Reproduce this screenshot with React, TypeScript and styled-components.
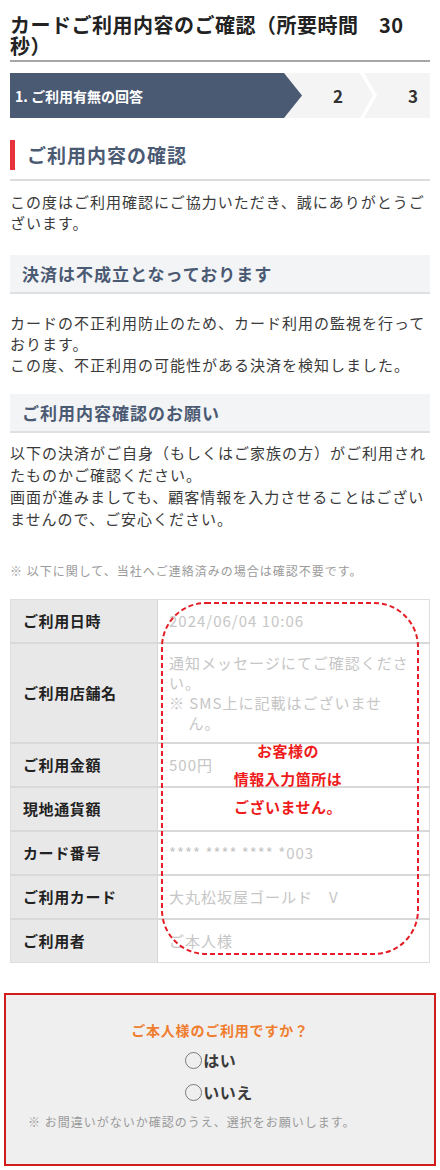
import React from 'react';
import styled, { createGlobalStyle } from 'styled-components';

const GlobalStyle = createGlobalStyle`
  html, body {
    margin: 0;
    padding: 0;
    background: #fff;
  }
  body {
    font-family: 'Noto Sans CJK JP', 'Noto Sans', sans-serif;
    color: #333;
    -webkit-font-smoothing: antialiased;
  }
`;

const Page = styled.div`
  width: 440px;
  padding: 0 10px 6px;
  box-sizing: border-box;
`;

const Title = styled.h1`
  margin: 0;
  padding: 14px 16px 4px 0;
  font-size: 20px;
  line-height: 21px;
  font-weight: 700;
  color: #222;
  letter-spacing: 0.5px;
  border-bottom: 2px solid #a6a6a6;
`;

const Steps = styled.ol`
  display: flex;
  height: 45px;
  margin: 11px 0 0;
  padding: 0;
  list-style: none;
  background: #f4f4f4;
`;

const Step = styled.li<{ $active?: boolean; $width?: number; $padLeft?: number; $chevron?: boolean }>`
  position: relative;
  display: flex;
  align-items: center;
  justify-content: ${p => (p.$active ? 'flex-start' : 'center')};
  box-sizing: border-box;
  width: ${p => (p.$width ? `${p.$width}px` : 'auto')};
  flex: ${p => (p.$width ? 'none' : '1')};
  padding-left: ${p => p.$padLeft ?? 0}px;
  background: ${p => (p.$active ? '#4b5a73' : 'transparent')};
  color: ${p => (p.$active ? '#fff' : '#333')};
  font-size: ${p => (p.$active ? '14px' : '17px')};
  font-weight: 700;
  clip-path: ${p =>
    p.$active ? 'polygon(0 0, calc(100% - 18px) 0, 100% 50%, calc(100% - 18px) 100%, 0 100%)' : 'none'};

  &::after {
    content: '';
    display: ${p => (p.$chevron ? 'block' : 'none')};
    position: absolute;
    top: 0;
    right: -3px;
    width: 17px;
    height: 100%;
    background: #fff;
    clip-path: polygon(0 0, 4px 0, 17px 50%, 4px 100%, 0 100%, 13px 50%);
  }
`;

const SectionTitle = styled.h2`
  display: flex;
  align-items: center;
  margin: 22px 0 0;
  padding: 0 0 9px;
  border-bottom: 2px solid #dcdcdc;
  font-size: 19px;
  line-height: 30px;
  font-weight: 700;
  color: #4b5a73;
  letter-spacing: 1px;

  &::before {
    content: '';
    width: 5px;
    height: 30px;
    margin-right: 12px;
    background: #e8333c;
  }
`;

const SubTitle = styled.h3<{ $top: number }>`
  margin: ${p => p.$top}px 0 0;
  padding: 0 12px;
  height: 37px;
  display: flex;
  align-items: center;
  background: #f3f4f6;
  border-bottom: 2px solid #dfe0e2;
  font-size: 17px;
  font-weight: 700;
  color: #4b5a73;
  letter-spacing: 1px;
`;

const Text = styled.p<{ $top: number; $lh?: number }>`
  margin: ${p => p.$top}px 0 0;
  font-size: 15px;
  line-height: ${p => p.$lh ?? 21}px;
  letter-spacing: 1px;
  color: #3a3a3a;
`;

const Note = styled.p<{ $top: number }>`
  margin: ${p => p.$top}px 0 0;
  font-size: 12px;
  line-height: 18px;
  letter-spacing: 1px;
  color: #9a9a9a;
`;

const TableWrap = styled.div`
  position: relative;
  margin-top: 19px;
`;

const Table = styled.table`
  width: 100%;
  border-collapse: collapse;
  border: 1px solid #dedede;
`;

const Row = styled.tr`
  border-top: 2px solid #d9d9d9;
  &:first-child {
    border-top: none;
  }
`;

const Label = styled.th`
  width: 147px;
  box-sizing: border-box;
  padding: 10px 0 11px 12px;
  background: #e8e8e8;
  border-right: 1px solid #d6d6d6;
  text-align: left;
  font-size: 15px;
  line-height: 21px;
  font-weight: 700;
  color: #222;
  letter-spacing: 0.6px;
`;

const Value = styled.td`
  padding: 9px 20px 9px 11px;
  font-size: 15px;
  line-height: 20px;
  letter-spacing: 1px;
  color: #c6c6c6;
  vertical-align: middle;
`;

const Hanging = styled.span`
  display: block;
  padding-left: 1.3em;
  text-indent: -1.3em;
`;

const Overlay = styled.div`
  position: absolute;
  left: 151px;
  top: 3px;
  width: 258px;
  bottom: 8px;
  display: flex;
  align-items: center;
  justify-content: center;
  pointer-events: none;
`;

const OverlayFrame = styled.svg`
  position: absolute;
  inset: 0;
  width: 100%;
  height: 100%;
  overflow: visible;
`;

const OverlayText = styled.p`
  position: relative;
  margin: 0;
  text-align: center;
  font-size: 15px;
  line-height: 28px;
  font-weight: 700;
  color: #ee1c1c;
  letter-spacing: 0.5px;
  transform: translateX(-2px);
`;

const AnswerBox = styled.div`
  margin: 30px -6px 0;
  padding: 25px 0 33px;
  border: 2px solid #d21b1b;
  background: #efefef;
`;

const Question = styled.p`
  margin: 0;
  text-align: center;
  font-size: 14px;
  line-height: 20px;
  font-weight: 700;
  color: #f07d2e;
  letter-spacing: 0.8px;
`;

const Options = styled.div`
  display: flex;
  flex-direction: column;
  align-items: flex-start;
  gap: 8px;
  width: max-content;
  margin: 8px auto 0;
  transform: translateX(-1px);
`;

const Option = styled.label`
  display: flex;
  align-items: center;
  font-size: 16px;
  line-height: 24px;
  font-weight: 700;
  color: #3a3a3a;
  letter-spacing: 0.5px;
  cursor: pointer;
`;

const Radio = styled.input`
  appearance: none;
  width: 17px;
  height: 17px;
  margin: 0 1px 0 0;
  border: 1.5px solid #7a7a7a;
  border-radius: 50%;
  background: transparent;

  &:checked {
    background: radial-gradient(circle, #555 40%, transparent 45%);
  }
`;

const BoxNote = styled.p`
  margin: 9px 0 0 22px;
  font-size: 12px;
  line-height: 18px;
  letter-spacing: 1px;
  color: #9a9a9a;
`;

const rows: { label: string; value: React.ReactNode }[] = [
  { label: 'ご利用日時', value: '2024/06/04 10:06' },
  {
    label: 'ご利用店舗名',
    value: (
      <>
        通知メッセージにてご確認ください。
        <Hanging>※ SMS上に記載はございません。</Hanging>
      </>
    ),
  },
  { label: 'ご利用金額', value: '500円' },
  { label: '現地通貨額', value: '' },
  { label: 'カード番号', value: '**** **** **** *003' },
  { label: 'ご利用カード', value: '大丸松坂屋ゴールド　V' },
  { label: 'ご利用者', value: 'ご本人様' },
];

const App: React.FC = () => {
  return (
    <>
      <GlobalStyle />
      <Page>
        <Title>カードご利用内容のご確認（所要時間　30秒）</Title>

        <Steps>
          <Step $active $width={292} $padLeft={5}>1. ご利用有無の回答</Step>
          <Step $width={72} $chevron>2</Step>
          <Step $padLeft={22}>3</Step>
        </Steps>

        <SectionTitle>ご利用内容の確認</SectionTitle>
        <Text $top={10}>この度はご利用確認にご協力いただき、誠にありがとうございます。</Text>

        <SubTitle $top={22}>決済は不成立となっております</SubTitle>
        <Text $top={18}>
          カードの不正利用防止のため、カード利用の監視を行っております。
          <br />
          この度、不正利用の可能性がある決済を検知しました。
        </Text>

        <SubTitle $top={19}>ご利用内容確認のお願い</SubTitle>
        <Text $top={9} $lh={22}>
          以下の決済がご自身（もしくはご家族の方）がご利用されたものかご確認ください。
          <br />
          画面が進みましても、顧客情報を入力させることはございませんので、ご安心ください。
        </Text>

        <Note $top={32}>※ 以下に関して、当社へご連絡済みの場合は確認不要です。</Note>

        <TableWrap>
          <Table>
            <tbody>
              {rows.map(r => (
                <Row key={r.label}>
                  <Label>{r.label}</Label>
                  <Value>{r.value}</Value>
                </Row>
              ))}
            </tbody>
          </Table>
          <Overlay>
            <OverlayFrame preserveAspectRatio="none">
              <rect
                x="1"
                y="1"
                width="calc(100% - 2px)"
                height="calc(100% - 2px)"
                rx="44"
                ry="44"
                fill="none"
                stroke="#e41e26"
                strokeWidth="2"
                strokeDasharray="5 3"
              />
            </OverlayFrame>
            <OverlayText>
              お客様の
              <br />
              情報入力箇所は
              <br />
              ございません。
            </OverlayText>
          </Overlay>
        </TableWrap>

        <AnswerBox>
          <Question>ご本人様のご利用ですか？</Question>
          <Options>
            <Option>
              <Radio type="radio" name="self" />
              はい
            </Option>
            <Option>
              <Radio type="radio" name="self" />
              いいえ
            </Option>
          </Options>
          <BoxNote>※ お間違いがないか確認のうえ、選択をお願いします。</BoxNote>
        </AnswerBox>
      </Page>
    </>
  );
};

export default App;
